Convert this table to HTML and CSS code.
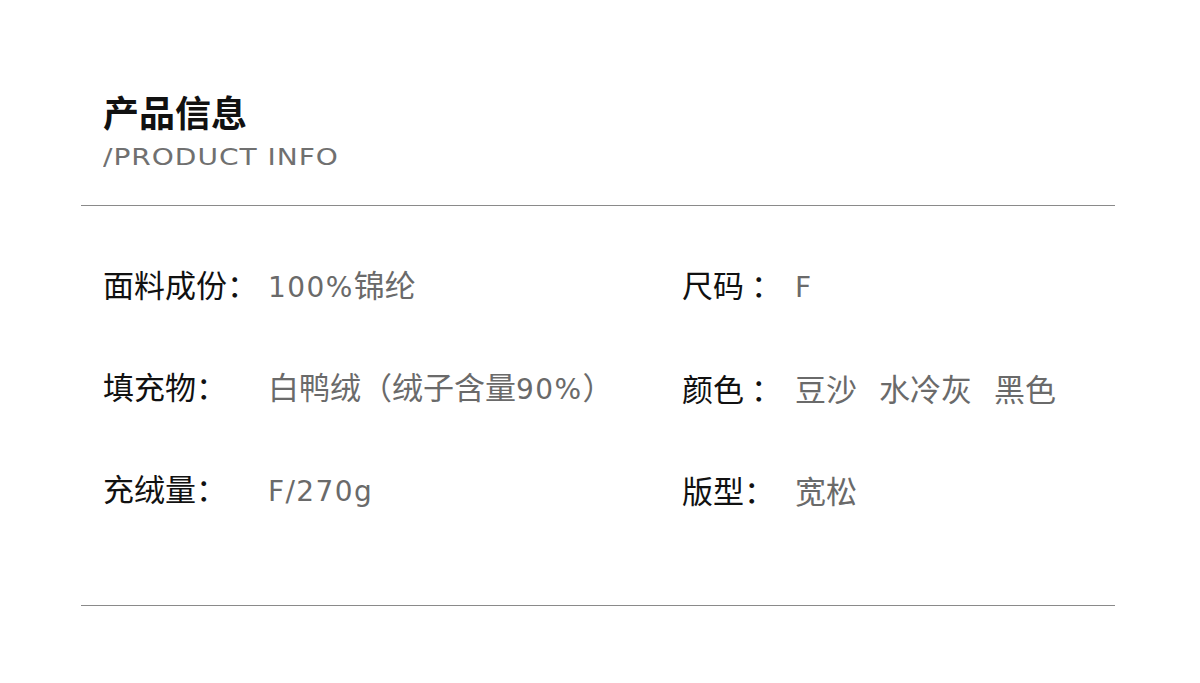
FILE: index.html
```html
<!DOCTYPE html>
<html lang="zh-CN">
<head>
<meta charset="utf-8">
<link rel="stylesheet" href="styles.css">
</head>
<body>
<div class="page">
  <header class="head">
    <h1 class="title">产品信息</h1>
    <div class="subtitle"><span class="subtitle-text">/PRODUCT INFO</span></div>
  </header>
  <section class="info">
    <div class="item left"><span class="label">面料成份：</span><span class="value"><span class="num">100%</span>锦纶</span></div>
    <div class="item right"><span class="label">尺码 ：</span><span class="value"><span class="num">F</span></span></div>
    <div class="item left"><span class="label">填充物：</span><span class="value">白鸭绒（绒子含量<span class="num">90%</span>）</span></div>
    <div class="item right"><span class="label">颜色 ：</span><span class="value colors"><span>豆沙</span><span>水冷灰</span><span>黑色</span></span></div>
    <div class="item left"><span class="label">充绒量：</span><span class="value"><span class="num">F/270g</span></span></div>
    <div class="item right"><span class="label">版型：</span><span class="value">宽松</span></div>
  </section>
</div>
</body>
</html>
```

FILE: styles.css
```css
* { box-sizing: border-box; }
html, body { margin: 0; padding: 0; background: #fff; }
body {
  font-family: "Noto Sans CJK SC", "Noto Sans", sans-serif;
  width: 1200px;
  height: 683px;
  overflow: hidden;
}
.page {
  margin: 0 85px 0 81px;
}
.head {
  padding: 93px 0 0 22px;
  border-bottom: 1px solid #8a8a8a;
  padding-bottom: 34px;
}
.title {
  margin: 0;
  font-size: 36px;
  line-height: 36px;
  font-weight: 700;
  color: #111;
}
.subtitle {
  margin-top: 14px;
  height: 28px;
}
.subtitle-text {
  display: inline-block;
  font-family: "DejaVu Sans", "Noto Sans", sans-serif;
  font-weight: 400;
  font-size: 23px;
  line-height: 28px;
  color: #707070;
  letter-spacing: 0.8px;
  transform: scaleX(1.22);
  transform-origin: left center;
}
.info {
  display: grid;
  grid-template-columns: 579px 1fr;
  grid-auto-rows: 102px;
  padding: 29px 0 64px 22px;
  border-bottom: 1px solid #8a8a8a;
}
.item {
  display: flex;
  align-items: baseline;
  align-self: center;
  font-size: 31px;
  line-height: 36px;
}
.label {
  color: #111;
}
.left .label { width: 165px; flex: none; }
.right .label { width: 113px; flex: none; }
.value {
  color: #6a6a6a;
  font-family: "Noto Sans CJK SC", sans-serif;
  font-weight: 400;
}
.num {
  font-family: "DejaVu Sans", sans-serif;
  font-size: 28px;
  letter-spacing: 1.4px;
}
.colors { display: flex; gap: 22px; }
```
